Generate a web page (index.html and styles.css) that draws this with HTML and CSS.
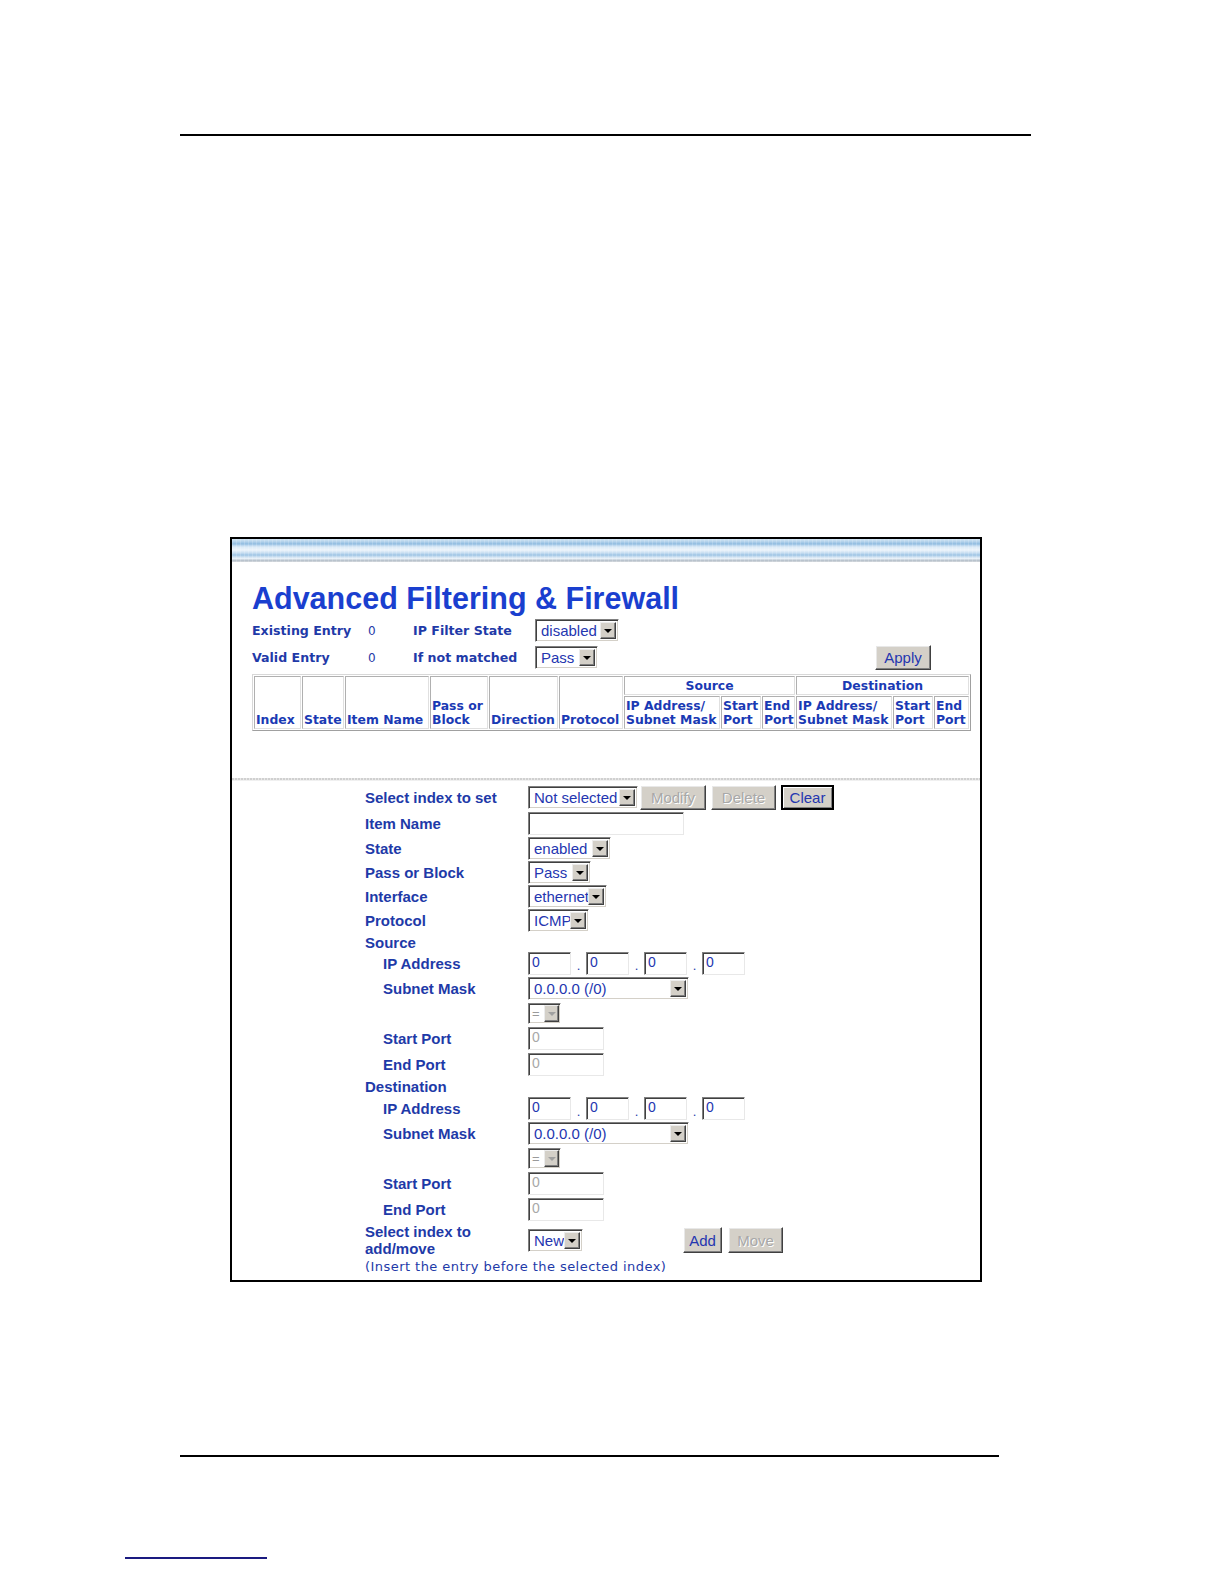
FILE: index.html
```html
<!DOCTYPE html>
<html>
<head>
<meta charset="utf-8">
<title>Advanced Filtering &amp; Firewall</title>
<link rel="stylesheet" href="styles.css">
</head>
<body>
<div class="page">
  <div class="rule-top"></div>

  <div class="shot">
    <div class="stripe"></div>
    <div class="top">
      <h1 class="title">Advanced Filtering &amp; Firewall</h1>
      <div class="status">
        <div class="st-row">
          <span class="st-label c1">Existing Entry</span>
          <span class="st-val c2">0</span>
          <span class="st-label c3">IP Filter State</span>
          <div class="sel w84"><span class="sel-text">disabled</span><span class="sel-btn"><i></i></span></div>
        </div>
        <div class="st-row">
          <span class="st-label c1">Valid Entry</span>
          <span class="st-val c2">0</span>
          <span class="st-label c3">If not matched</span>
          <div class="sel w63"><span class="sel-text">Pass</span><span class="sel-btn"><i></i></span></div>
          <button class="btn apply">Apply</button>
        </div>
      </div>
      <table class="rules">
        <colgroup>
          <col class="k47"><col class="k42"><col class="k84"><col class="k58"><col class="k69"><col class="k64">
          <col class="k96"><col class="k40"><col class="k33"><col class="k96"><col class="k40"><col class="k35">
        </colgroup>
        <tr class="hr1">
          <th rowspan="2">Index</th>
          <th rowspan="2">State</th>
          <th rowspan="2">Item Name</th>
          <th rowspan="2">Pass or<br>Block</th>
          <th rowspan="2">Direction</th>
          <th rowspan="2">Protocol</th>
          <th colspan="3" class="grp">Source</th>
          <th colspan="3" class="grp">Destination</th>
        </tr>
        <tr class="hr2">
          <th>IP Address/<br>Subnet Mask</th>
          <th>Start<br>Port</th>
          <th>End<br>Port</th>
          <th>IP Address/<br>Subnet Mask</th>
          <th>Start<br>Port</th>
          <th>End<br>Port</th>
        </tr>
      </table>
    </div>

    <div class="sep"></div>

    <div class="form">
      <div class="lab">Select index to set</div>
      <div class="ctl">
        <div class="sel w110"><span class="sel-text">Not selected</span><span class="sel-btn"><i></i></span></div>
        <button class="btn dis b66 g2">Modify</button>
        <button class="btn dis b65 g5">Delete</button>
        <button class="btn def b53 g5">Clear</button>
      </div>

      <div class="lab">Item Name</div>
      <div class="ctl"><div class="inp w156"></div></div>

      <div class="lab">State</div>
      <div class="ctl"><div class="sel w83"><span class="sel-text">enabled</span><span class="sel-btn"><i></i></span></div></div>

      <div class="lab">Pass or Block</div>
      <div class="ctl"><div class="sel w63"><span class="sel-text">Pass</span><span class="sel-btn"><i></i></span></div></div>

      <div class="lab">Interface</div>
      <div class="ctl"><div class="sel w79"><span class="sel-text">ethernet</span><span class="sel-btn"><i></i></span></div></div>

      <div class="lab">Protocol</div>
      <div class="ctl"><div class="sel w61"><span class="sel-text">ICMP</span><span class="sel-btn"><i></i></span></div></div>

      <div class="lab">Source</div>
      <div class="ctl"></div>

      <div class="lab sub">IP Address</div>
      <div class="ctl ip">
        <div class="inp w43">0</div><span class="dot">.</span>
        <div class="inp w43">0</div><span class="dot">.</span>
        <div class="inp w43">0</div><span class="dot">.</span>
        <div class="inp w43">0</div>
      </div>

      <div class="lab sub">Subnet Mask</div>
      <div class="ctl"><div class="sel w161"><span class="sel-text">0.0.0.0 (/0)</span><span class="sel-btn"><i></i></span></div></div>

      <div class="lab"></div>
      <div class="ctl"><div class="sel w33 off"><span class="sel-text">=</span><span class="sel-btn"><i></i></span></div></div>

      <div class="lab sub">Start Port</div>
      <div class="ctl"><div class="inp w76 off">0</div></div>

      <div class="lab sub">End Port</div>
      <div class="ctl"><div class="inp w76 off">0</div></div>

      <div class="lab">Destination</div>
      <div class="ctl"></div>

      <div class="lab sub">IP Address</div>
      <div class="ctl ip">
        <div class="inp w43">0</div><span class="dot">.</span>
        <div class="inp w43">0</div><span class="dot">.</span>
        <div class="inp w43">0</div><span class="dot">.</span>
        <div class="inp w43">0</div>
      </div>

      <div class="lab sub">Subnet Mask</div>
      <div class="ctl"><div class="sel w161"><span class="sel-text">0.0.0.0 (/0)</span><span class="sel-btn"><i></i></span></div></div>

      <div class="lab"></div>
      <div class="ctl"><div class="sel w33 off"><span class="sel-text">=</span><span class="sel-btn"><i></i></span></div></div>

      <div class="lab sub">Start Port</div>
      <div class="ctl"><div class="inp w76 off">0</div></div>

      <div class="lab sub">End Port</div>
      <div class="ctl"><div class="inp w76 off">0</div></div>

      <div class="lab two">Select index to<br>add/move</div>
      <div class="ctl">
        <div class="sel w55"><span class="sel-text">New</span><span class="sel-btn"><i></i></span></div>
        <button class="btn b39 g100 tall">Add</button>
        <button class="btn dis b55 g6 tall">Move</button>
      </div>

      <div class="note">(Insert the entry before the selected index)</div>
    </div>
  </div>

  <div class="rule-bottom"></div>
  <div class="rule-link"></div>
</div>
</body>
</html>
```

FILE: styles.css
```css
html, body {
  margin: 0;
  padding: 0;
  background: #ffffff;
  overflow: hidden;
}
body {
  font-family: "Liberation Sans", Arial, sans-serif;
}
.page {
  width: 1224px;
  height: 1584px;
  padding-top: 134px;
  box-sizing: border-box;
  overflow: hidden;
}
.rule-top {
  margin-left: 180px;
  width: 851px;
  height: 2px;
  background: #000;
}
.shot {
  margin-top: 401px;
  margin-left: 230px;
  width: 752px;
  height: 745px;
  border: 2px solid #000;
  box-sizing: border-box;
  background: #fff;
}
.stripe {
  height: 23px;
  background:
    repeating-linear-gradient(90deg, rgba(255,255,255,0.18) 0 1px, rgba(255,255,255,0) 1px 4px),
    linear-gradient(180deg,
      #d2e4f2 0px, #bcd8ee 2px, #8fbbe0 5px, #b3d2ec 6px,
      #dcebf7 8px, #eef5fb 11px, #c6ddf1 14px, #9ec4e4 16px,
      #cfe2f2 18px, #eef4f9 20px, #b0bcc8 21px, #d4d8dc 23px);
}
.top {
  padding: 0 0 0 20px;
}
.title {
  margin: 20px 0 0 0;
  font-family: "Liberation Sans", Arial, sans-serif;
  font-weight: bold;
  font-size: 30.5px;
  line-height: 33px;
  color: #1a3fcf;
}
.status {
  margin-top: 2px;
  width: 717px;
}
.st-row {
  display: flex;
  align-items: center;
  height: 27px;
}
.st-label, .st-val {
  font-family: "DejaVu Sans", Verdana, sans-serif;
  font-weight: bold;
  font-size: 12.6px;
  color: #1f3aa8;
}
.st-val {
  font-weight: normal;
  font-size: 12px;
}
.c1 { width: 116px; }
.c2 { width: 45px; }
.c3 { width: 122px; }

.btn.apply {
  margin-left: auto;
  margin-right: 38px;
  width: 56px;
  height: 25px;
}

/* table */
.rules {
  margin-top: 3px;
  width: 718px;
  table-layout: fixed;
  border-collapse: separate;
  border-spacing: 1px;
  border: 1px solid #a8a8a8;
  border-color: #d8d8d8 #a0a0a0 #a0a0a0 #d8d8d8;
}
.rules th {
  font-family: "DejaVu Sans", Verdana, sans-serif;
  font-weight: bold;
  font-size: 12.4px;
  line-height: 14px;
  color: #1a3ab4;
  text-align: left;
  vertical-align: bottom;
  white-space: nowrap;
  padding: 0 0 1px 1px;
  border: 1px solid #c4c4c4;
  border-color: #b0b0b0 #e0e0e0 #e0e0e0 #b0b0b0;
}
.rules th.grp {
  text-align: center;
  vertical-align: middle;
  padding: 0;
}
.hr1 { height: 19px; }
.hr2 { height: 33px; }
.k47 { width: 47px; } .k42 { width: 42px; } .k84 { width: 84px; }
.k58 { width: 58px; } .k69 { width: 69px; } .k64 { width: 64px; }
.k96 { width: 96px; } .k40 { width: 40px; } .k33 { width: 33px; }
.k35 { width: 35px; }

.sep {
  margin-top: 47px;
  height: 2px;
  background: repeating-linear-gradient(90deg, #d0d0d0 0 2px, #e8e8e8 2px 3px);
  border-bottom: 1px solid #f0f0f0;
}

/* form */
.form {
  margin-top: 3px;
  margin-left: 133px;
  display: grid;
  grid-template-columns: 163px 1fr;
  grid-template-rows: 26px 26px 24px 24px 24px 24px 20px 23px 26px 24px 26px 26px 19px 25px 25px 24px 26px 26px 36px 17px;
}
.lab {
  display: flex;
  align-items: center;
  font-family: "Liberation Sans", Arial, sans-serif;
  font-weight: bold;
  font-size: 15px;
  color: #1e3aa8;
  white-space: nowrap;
}
.lab.sub { padding-left: 18px; }
.lab.two { line-height: 17px; align-items: flex-start; padding-top: 1px; }
.ctl {
  display: flex;
  align-items: center;
}
.ctl.ip .dot {
  width: 15px;
  text-align: center;
  font-family: "Liberation Sans", Arial, sans-serif;
  font-size: 13px;
  color: #1e3aa8;
  align-self: flex-end;
  padding-bottom: 2px;
}
.note {
  grid-column: 1 / 3;
  font-family: "DejaVu Sans", Verdana, sans-serif;
  font-size: 13px;
  line-height: 17px;
  color: #1e3aa8;
  letter-spacing: 0.45px;
}

/* select */
.sel {
  box-sizing: border-box;
  height: 23px;
  display: flex;
  align-items: stretch;
  background: #fff;
  border: 1px solid;
  border-color: #808080 #ffffff #ffffff #808080;
  box-shadow: inset 1px 1px 0 #404040, inset -1px -1px 0 #d4d0c8;
  padding: 2px;
}
.sel-text {
  flex: 1;
  font-family: "Liberation Sans", Arial, sans-serif;
  font-size: 15px;
  line-height: 17px;
  color: #2436b0;
  padding-left: 3px;
  white-space: nowrap;
  overflow: hidden;
}
.sel-btn {
  width: 16px;
  flex: none;
  box-sizing: border-box;
  background: #d4d0c8;
  border: 1px solid;
  border-color: #ececec #404040 #404040 #ececec;
  box-shadow: inset -1px -1px 0 #808080;
  display: flex;
  align-items: center;
  justify-content: center;
}
.sel-btn i {
  display: block;
  width: 0;
  height: 0;
  border-left: 4px solid transparent;
  border-right: 4px solid transparent;
  border-top: 4px solid #000;
  margin-top: 1px;
}
.sel.off { height: 21px; padding: 1px 1px 1px 2px; }
.sel.off .sel-text {
  color: #9a9a9a;
  font-size: 13px;
  padding-left: 1px;
  overflow: visible;
}
.sel.off .sel-btn { width: 15px; }
.sel.off .sel-btn i { border-top-color: #a0a0a0; }

.w33 { width: 33px; } .w55 { width: 55px; } .w61 { width: 61px; }
.w63 { width: 63px; } .w79 { width: 79px; } .w83 { width: 83px; }
.w84 { width: 84px; } .w110 { width: 110px; } .w161 { width: 161px; }
.w43 { width: 43px; } .w76 { width: 76px; } .w156 { width: 156px; }

/* input */
.inp {
  box-sizing: border-box;
  height: 23px;
  background: #fff;
  border: 1px solid;
  border-color: #808080 #e8e8e8 #e8e8e8 #808080;
  box-shadow: inset 1px 1px 0 #404040;
  font-family: "Liberation Sans", Arial, sans-serif;
  font-size: 14px;
  line-height: 19px;
  color: #2436b0;
  padding-left: 3px;
}
.inp.off { color: #a8a8a8; }

/* buttons */
.btn {
  box-sizing: border-box;
  height: 25px;
  margin: 0;
  padding: 0;
  background: #d4d0c8;
  border: 1px solid;
  border-color: #ffffff #404040 #404040 #ffffff;
  box-shadow: inset -1px -1px 0 #808080, inset 1px 1px 0 #e8e8e8;
  font-family: "Liberation Sans", Arial, sans-serif;
  font-size: 15px;
  color: #2436b0;
  text-align: center;
}
.btn.dis {
  color: #a8a8a8;
  text-shadow: 1px 1px 0 #ffffff;
}
.btn.def {
  border: 2px solid #000;
  box-shadow: inset 1px 1px 0 #ffffff, inset -1px -1px 0 #808080;
}
.btn.tall { height: 26px; }
.b39 { width: 39px; } .b53 { width: 53px; } .b55 { width: 55px; }
.b65 { width: 65px; } .b66 { width: 66px; }
.g2 { margin-left: 2px; } .g5 { margin-left: 5px; } .g6 { margin-left: 6px; }
.g100 { margin-left: 100px; }

.rule-bottom {
  margin-top: 173px;
  margin-left: 180px;
  width: 819px;
  height: 2px;
  background: #000;
}
.rule-link {
  margin-top: 100px;
  margin-left: 125px;
  width: 142px;
  height: 2px;
  background: #1a1a80;
}
```
